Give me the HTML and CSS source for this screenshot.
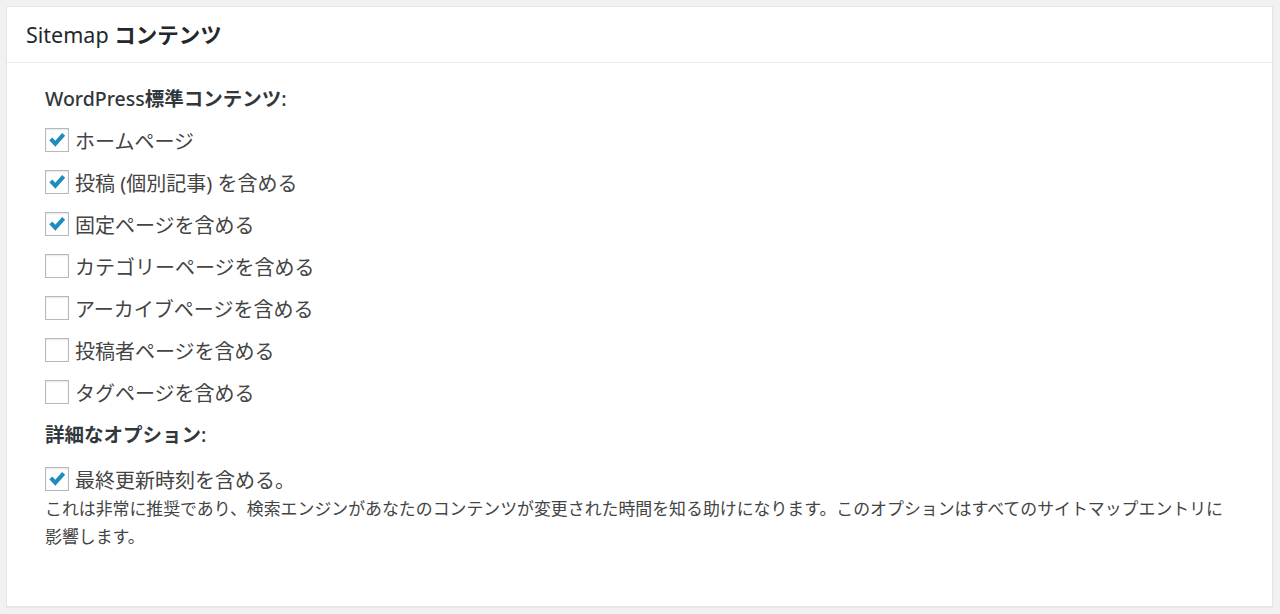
FILE: index.html
```html
<!DOCTYPE html>
<html lang="ja">
<head>
<meta charset="utf-8">
<title>Sitemap コンテンツ</title>
<link rel="stylesheet" href="styles.css">
</head>
<body>
<div class="card">
  <div class="card-header">
    <h2 class="card-title"><span class="lat">Sitemap</span> <span class="jp-bold">コンテンツ</span></h2>
  </div>
  <div class="card-body">
    <h3 class="group-title"><span class="lat">WordPress</span>標準コンテンツ<span class="lat">:</span></h3>
    <label class="option"><span class="box checked"><svg viewBox="0 0 24 24"><path d="M3.6 12.2 L6.9 9.3 L10.1 12.8 L17.6 4.4 L20.9 7.4 L10.2 19.4 Z"/></svg></span>ホームページ</label>
    <label class="option"><span class="box checked"><svg viewBox="0 0 24 24"><path d="M3.6 12.2 L6.9 9.3 L10.1 12.8 L17.6 4.4 L20.9 7.4 L10.2 19.4 Z"/></svg></span>投稿 (個別記事) を含める</label>
    <label class="option"><span class="box checked"><svg viewBox="0 0 24 24"><path d="M3.6 12.2 L6.9 9.3 L10.1 12.8 L17.6 4.4 L20.9 7.4 L10.2 19.4 Z"/></svg></span>固定ページを含める</label>
    <label class="option"><span class="box"></span>カテゴリーページを含める</label>
    <label class="option"><span class="box"></span>アーカイブページを含める</label>
    <label class="option"><span class="box"></span>投稿者ページを含める</label>
    <label class="option"><span class="box"></span>タグページを含める</label>
    <h3 class="group-title">詳細なオプション<span class="lat">:</span></h3>
    <label class="option option-last"><span class="box checked"><svg viewBox="0 0 24 24"><path d="M3.6 12.2 L6.9 9.3 L10.1 12.8 L17.6 4.4 L20.9 7.4 L10.2 19.4 Z"/></svg></span>最終更新時刻を含める。</label>
    <p class="description">これは非常に推奨であり、検索エンジンがあなたのコンテンツが変更された時間を知る助けになります。このオプションはすべてのサイトマップエントリに影響します。</p>
  </div>
</div>
</body>
</html>
```
FILE: styles.css
```css
html, body {
  margin: 0;
  padding: 0;
}
body {
  background: #f1f1f1;
  padding: 6px 7px 7px 6px;
  font-family: "Noto Sans", "Noto Sans CJK JP", sans-serif;
  color: #444;
}
.card {
  background: #fff;
  border: 1px solid #e5e5e5;
  box-shadow: 0 1px 1px rgba(0,0,0,0.04);
  height: 599px;
}
.card-header {
  height: 55px;
  display: flex;
  align-items: center;
  padding: 0 19px;
  border-bottom: 1px solid #eeeeee;
}
.card-title {
  margin: 0;
  font-size: 21.5px;
  font-weight: 400;
  color: #23282d;
  line-height: 1;
}
.jp-bold {
  font-weight: 700;
}
.card-body {
  padding: 15px 40px 0 38px;
}
.group-title {
  margin: 0;
  font-size: 19.5px;
  font-weight: 700;
  color: #32373c;
  line-height: 42px;
  height: 42px;
}
.group-title .lat {
  font-weight: 500;
}
.option {
  display: flex;
  align-items: center;
  height: 42px;
  font-size: 20px;
  color: #444;
  margin-top: -1px;
  margin-bottom: 1px;
}
.option-last {
  margin-top: 2px;
}
.box {
  width: 22px;
  height: 22px;
  border: 1.5px solid #b4b9be;
  background: #fff;
  box-shadow: inset 0 1px 2px rgba(0,0,0,0.1);
  margin-right: 6px;
  flex: none;
  display: flex;
  align-items: center;
  justify-content: center;
}
.box svg {
  width: 22px;
  height: 22px;
  fill: #1e8cbe;
}
.description {
  margin: -6px 0 0 0;
  font-size: 16.9px;
  line-height: 28px;
  color: #444;
}
```
